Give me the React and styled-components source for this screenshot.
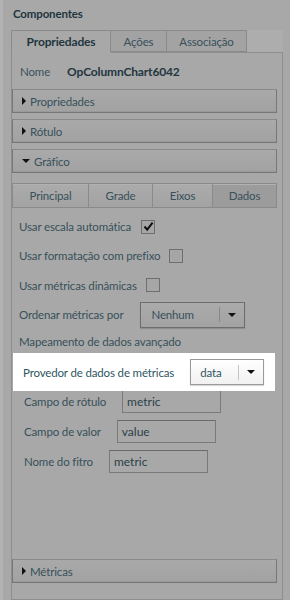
import React from "react";
import styled, { createGlobalStyle } from "styled-components";

const Global = createGlobalStyle`
  html, body { margin: 0; padding: 0; background: #a8a8a8; }
  body { font-family: Lato, "Noto Sans", sans-serif; font-size: 11.5px; letter-spacing: -0.15px; color: #2b4650; white-space: nowrap; }
`;

const Page = styled.div`
  width: 290px;
  height: 600px;
  box-sizing: border-box;
  border-left: 3px solid #b3b3b3;
  background: #a8a8a8;
  display: flex;
  flex-direction: column;
  overflow: hidden;
`;

const Title = styled.div`
  font-weight: 700;
  color: #1f3640;
  padding: 7px 0 0 10px;
  height: 30px;
  box-sizing: border-box;
`;

const TabBar = styled.div`
  display: flex;
  margin-left: 8px;
  width: 272px;
  height: 22px;
  background: #adadad;
`;

const Tab = styled.div`
  width: ${(p) => p.w}px;
  box-sizing: border-box;
  display: flex;
  align-items: center;
  justify-content: center;
  font-weight: ${(p) => (p.active ? 700 : 400)};
  font-size: ${(p) => (p.active ? "12px" : "11.5px")};
  color: ${(p) => (p.active ? "#1f3640" : "#37505a")};
  background: ${(p) => (p.active ? "#a8a8a8" : "#a3a3a3")};
  border: 1px solid #8a8a8a;
  border-bottom: ${(p) => (p.active ? "none" : "1px solid #8a8a8a")};
  border-left: ${(p) => (p.first ? "1px solid #8a8a8a" : "none")};
`;

const Content = styled.div`
  flex: 1;
  margin-left: 8px;
  width: 272px;
  box-sizing: border-box;
  border: 1px solid #8e8e8e;
  border-top: none;
  display: flex;
  flex-direction: column;
  padding-right: 5px;
`;

const ContentTop = styled.div`
  height: 1px;
  margin-left: 99px;
  margin-right: -5px;
  background: #8e8e8e;
`;

const NameRow = styled.div`
  display: flex;
  align-items: center;
  height: 36px;
  padding-left: 8px;
  gap: 17px;
  color: #3a525c;
`;

const NameValue = styled.span`
  font-weight: 700;
  font-size: 12px;
  color: #1f3640;
`;

const Accordion = styled.div`
  height: 24px;
  box-sizing: border-box;
  border: 1px solid #777;
  border-top-color: #8a8a8a;
  box-shadow: inset 0 -1px 0 #999;
  background: linear-gradient(#a9a9a9, #a2a2a2);
  display: flex;
  align-items: center;
  padding-left: 9px;
  gap: 4px;
  color: #37505a;
  margin-top: ${(p) => p.mt || 0}px;
`;

const Arrow = styled.span`
  width: 0;
  height: 0;
  ${(p) =>
    p.down
      ? `border-left: 4px solid transparent; border-right: 4px solid transparent; border-top: 4px solid #111;`
      : `border-top: 4px solid transparent; border-bottom: 4px solid transparent; border-left: 4px solid #111;`}
`;

const SubTabs = styled.div`
  display: flex;
  margin-top: 10px;
  height: 25px;
`;

const SubTab = styled.div`
  width: ${(p) => p.w}px;
  box-sizing: border-box;
  display: flex;
  align-items: center;
  justify-content: center;
  border: 1px solid #8a8a8a;
  border-left: ${(p) => (p.first ? "1px solid #8a8a8a" : "none")};
  background: ${(p) => (p.active ? "#9c9c9c" : "linear-gradient(#ababab, #a3a3a3)")};
  box-shadow: inset 0 1px 0 #b2b2b2;
  color: #37505a;
`;

const Rows = styled.div`
  display: flex;
  flex-direction: column;
  padding-top: 4px;
`;

const Row = styled.div`
  display: flex;
  align-items: center;
  height: ${(p) => p.h || 29}px;
  padding-left: 7px;
  gap: ${(p) => p.gap || 9}px;
  color: #37505a;
`;

const Check = styled.div`
  width: 12px;
  height: 12px;
  border: 1px solid #6e6e6e;
  background: #a6a6a6;
  display: flex;
  align-items: center;
  justify-content: center;
`;

const Select = styled.div`
  width: ${(p) => p.w}px;
  height: 26px;
  box-sizing: border-box;
  border: 1px solid ${(p) => (p.light ? "#9a9a9a" : "#6d6d6d")};
  background: ${(p) => (p.light ? "linear-gradient(#ffffff, #f1f1f1)" : "linear-gradient(#ababab, #a2a2a2)")};
  display: flex;
  align-items: center;
  box-shadow: 0 1px 1px rgba(0,0,0,0.15);
`;

const SelectText = styled.div`
  flex: 1;
  padding-left: ${(p) => p.pl}px;
  color: ${(p) => (p.light ? "#2e5562" : "#37505a")};
`;

const SelectBtn = styled.div`
  width: 24px;
  height: 15px;
  border-left: 1px solid ${(p) => (p.light ? "#c4c4c4" : "#888")};
  display: flex;
  align-items: center;
  justify-content: center;
`;

const Highlight = styled.div`
  position: relative;
  z-index: 1;
  background: #ffffff;
  margin: 0 2px -5px 1px;
  height: 38px;
  display: flex;
  align-items: center;
  padding-left: 10px;
  gap: 16px;
  color: #2e5562;
`;

const FieldRow = styled.div`
  display: flex;
  align-items: center;
  height: 30px;
  padding-left: 12px;
  gap: 16px;
  color: #37505a;
`;

const Input = styled.div`
  width: 99px;
  height: 23px;
  box-sizing: border-box;
  border: 1px solid #7a7a7a;
  border-top-color: #6a6a6a;
  background: #a8a8a8;
  display: flex;
  align-items: center;
  padding-left: 4px;
  color: #2a3f48;
  font-size: 12px;
  letter-spacing: 0;
`;

const Spacer = styled.div`
  flex: 1;
`;

const Bottom = styled.div`
  height: 16px;
`;

const CheckMark = () => (
  <svg width="11" height="11" viewBox="0 0 11 11">
    <path d="M1.5 5.5 L4.2 8.7 L9.6 1.6" fill="none" stroke="#111" strokeWidth="2" />
  </svg>
);

export default function App() {
  return (
    <>
      <Global />
      <Page>
        <Title>Componentes</Title>
        <TabBar>
          <Tab w={100} active first>Propriedades</Tab>
          <Tab w={56}>Ações</Tab>
          <Tab w={80}>Associação</Tab>
        </TabBar>
        <Content>
          <ContentTop />
          <NameRow>
            <span>Nome</span>
            <NameValue>OpColumnChart6042</NameValue>
          </NameRow>
          <Accordion><Arrow />Propriedades</Accordion>
          <Accordion mt={6}><Arrow />Rótulo</Accordion>
          <Accordion mt={6}><Arrow down />Gráfico</Accordion>
          <SubTabs>
            <SubTab w={77} first>Principal</SubTab>
            <SubTab w={64}>Grade</SubTab>
            <SubTab w={60}>Eixos</SubTab>
            <SubTab w={64} active>Dados</SubTab>
          </SubTabs>
          <Rows>
            <Row h={29} gap={10}>
              <span>Usar escala automática</span>
              <Check><CheckMark /></Check>
            </Row>
            <Row h={29}>
              <span>Usar formatação com prefixo</span>
              <Check />
            </Row>
            <Row h={30}>
              <span>Usar métricas dinâmicas</span>
              <Check />
            </Row>
            <Row h={29} gap={17}>
              <span>Ordenar métricas por</span>
              <Select w={105}>
                <SelectText pl={10}>Nenhum</SelectText>
                <SelectBtn><Arrow down /></SelectBtn>
              </Select>
            </Row>
            <Row h={24}>
              <span>Mapeamento de dados avançado</span>
            </Row>
          </Rows>
          <Highlight>
            <span>Provedor de dados de métricas</span>
            <Select w={74} light>
              <SelectText pl={9} light>data</SelectText>
              <SelectBtn light><Arrow down /></SelectBtn>
            </Select>
          </Highlight>
          <FieldRow>
            <span>Campo de rótulo</span>
            <Input>metric</Input>
          </FieldRow>
          <FieldRow>
            <span>Campo de valor</span>
            <Input>value</Input>
          </FieldRow>
          <FieldRow>
            <span>Nome do fitro</span>
            <Input>metric</Input>
          </FieldRow>
          <Spacer />
          <Accordion><Arrow />Métricas</Accordion>
          <Bottom />
        </Content>
      </Page>
    </>
  );
}
